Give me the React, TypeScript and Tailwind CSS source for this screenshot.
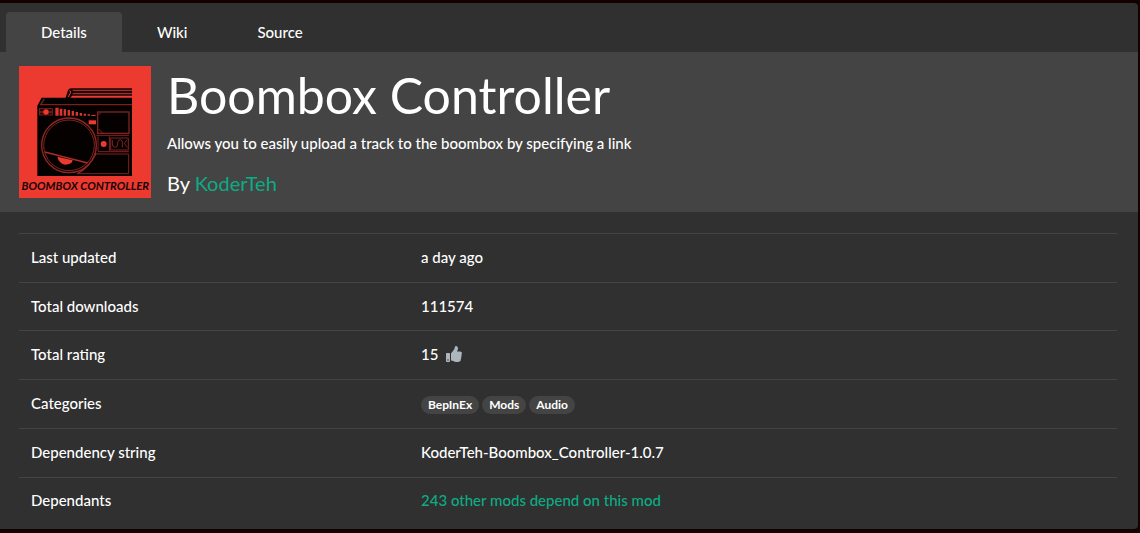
import type { ReactNode } from "react";
import { FaThumbsUp } from "react-icons/fa";

const tabs = [
  { label: "Details", active: true },
  { label: "Wiki", active: false },
  { label: "Source", active: false },
];

const categories = ["BepInEx", "Mods", "Audio"];

const rows: { label: string; value: ReactNode }[] = [
  { label: "Last updated", value: "a day ago" },
  { label: "Total downloads", value: "111574" },
  {
    label: "Total rating",
    value: (
      <span className="flex items-center gap-2">
        15 <FaThumbsUp className="size-4 text-[#adb5bd]" aria-hidden="true" />
      </span>
    ),
  },
  {
    label: "Categories",
    value: (
      <span className="flex items-center gap-[3px] pt-1">
        {categories.map((name) => (
          <a
            key={name}
            href="#category"
            className="rounded-full bg-[#444444] px-[7px] text-[12px] leading-[18px] font-bold text-white"
          >
            {name}
          </a>
        ))}
      </span>
    ),
  },
  { label: "Dependency string", value: "KoderTeh-Boombox_Controller-1.0.7" },
  {
    label: "Dependants",
    value: (
      <a href="#dependants" className="text-[#0cac84]">
        243 other mods depend on this mod
      </a>
    ),
  },
];

function BoomboxLogo() {
  return (
    <svg viewBox="27 18 396 396" className="size-[132px] shrink-0" role="img" aria-label="Boombox Controller">
      <rect x="27" y="18" width="396" height="396" fill="#ed3a31" />
      <path d="M166 115L174 91Q176 85 184 85H366V107H186L181 115Z" fill="#190405" />
      <path d="M188 91H366M188 101H366" stroke="#a92b26" strokeWidth="4" />
      <path d="M178 92Q184 92 181 99L175 111" fill="none" stroke="#ed3a31" strokeWidth="3" />
      <path d="M95 113H366V348H82V137Z" fill="#050101" />
      <path d="M103 117L92 134H366" fill="none" stroke="#79201d" strokeWidth="4" />
      <rect x="88" y="146" width="39" height="19" fill="#240807" stroke="#9b2924" strokeWidth="2" />
      <path d="M89 156H126" stroke="#9b2924" strokeWidth="3" />
      <circle cx="108" cy="156" r="8" fill="#ed3a31" />
      <path
        d="M136 143H146V167H136ZM149 146H157V167H149ZM161 148H168V167H161ZM173 150H180V167H173ZM185 153H192V167H185ZM197 156H204V167H197ZM209 159H216V167H209ZM221 161H228V167H221ZM233 163H240V167H233ZM244 165H257V168H244Z"
        fill="#d7372e"
      />
      <g fill="none" stroke="#80231f" strokeWidth="3">
        <rect x="263" y="156" width="94" height="64" strokeWidth="4" />
        <path d="M266 165L273 158M266 207L278 219M259 226H357M264 229V273M298 229V273M264 275H357M302 234H355V270H302ZM260 282H356V341H201" />
        <path d="M307 240V252Q307 262 316 262Q323 262 323 252V248Q323 239 331 239Q337 239 337 248V262M352 239L343 250L352 262" />
      </g>
      <circle cx="281" cy="252" r="9" fill="#ed3a31" />
      <circle cx="177" cy="256" r="85" fill="#050101" />
      <circle cx="177" cy="256" r="82" fill="none" stroke="#8f2722" strokeWidth="4" />
      <circle cx="177" cy="256" r="76" fill="none" stroke="#7d231f" strokeWidth="3" />
      <rect x="236" y="181" width="22" height="12" fill="#ed3a31" />
      <path d="M104 276L233 309" stroke="#a82d27" strokeWidth="4" />
      <path d="M142 290L188 301Q185 314 166 314Q147 311 142 290Z" fill="#ed3a31" />
      <path d="M259 279Q236 325 202 341" fill="none" stroke="#8f2722" strokeWidth="4" />
      <text
        x="226"
        y="390"
        textAnchor="middle"
        fill="#190405"
        fontSize="34"
        className="font-['Lato',sans-serif] font-bold italic"
      >
        BOOMBOX CONTROLLER
      </text>
    </svg>
  );
}

export default function App() {
  return (
    <div className="min-h-screen bg-[#130001] pt-[3px] pr-0.5 pb-1 font-['Lato',sans-serif] text-[15px] leading-6 font-medium text-white">
      <main className="rounded-r bg-[#303030] pb-1">
        <nav className="flex px-1.5 pt-[9px]" aria-label="Package pages">
          {tabs.map((tab) => (
            <a
              key={tab.label}
              href={`#${tab.label.toLowerCase()}`}
              aria-current={tab.active ? "page" : undefined}
              className={`px-[35px] py-2 ${tab.active ? "rounded-t bg-[#444444]" : ""}`}
            >
              {tab.label}
            </a>
          ))}
        </nav>

        <header className="flex gap-4 bg-[#444444] px-[19px] pt-[14px] pb-[14px]">
          <BoomboxLogo />
          <div>
            <h1 className="text-[50px] leading-[58px] font-normal">Boombox Controller</h1>
            <p className="mt-[7px]">Allows you to easily upload a track to the boombox by specifying a link</p>
            <p className="mt-4 text-[20px] leading-6 font-normal">
              By{" "}
              <a href="#koderteh" className="text-[#0cac84]">
                KoderTeh
              </a>
            </p>
          </div>
        </header>

        <div className="pt-[21px] pr-[21px] pl-[19px]">
          <table className="h-[292px] w-full table-fixed border-collapse text-left">
            <tbody>
              {rows.map((row) => (
                <tr key={row.label} className="border-t border-[#444444]">
                  <th scope="row" className="w-[390px] px-3 pb-0.5 font-medium">
                    {row.label}
                  </th>
                  <td className="px-3 pb-0.5">{row.value}</td>
                </tr>
              ))}
            </tbody>
          </table>
        </div>
      </main>
    </div>
  );
}
